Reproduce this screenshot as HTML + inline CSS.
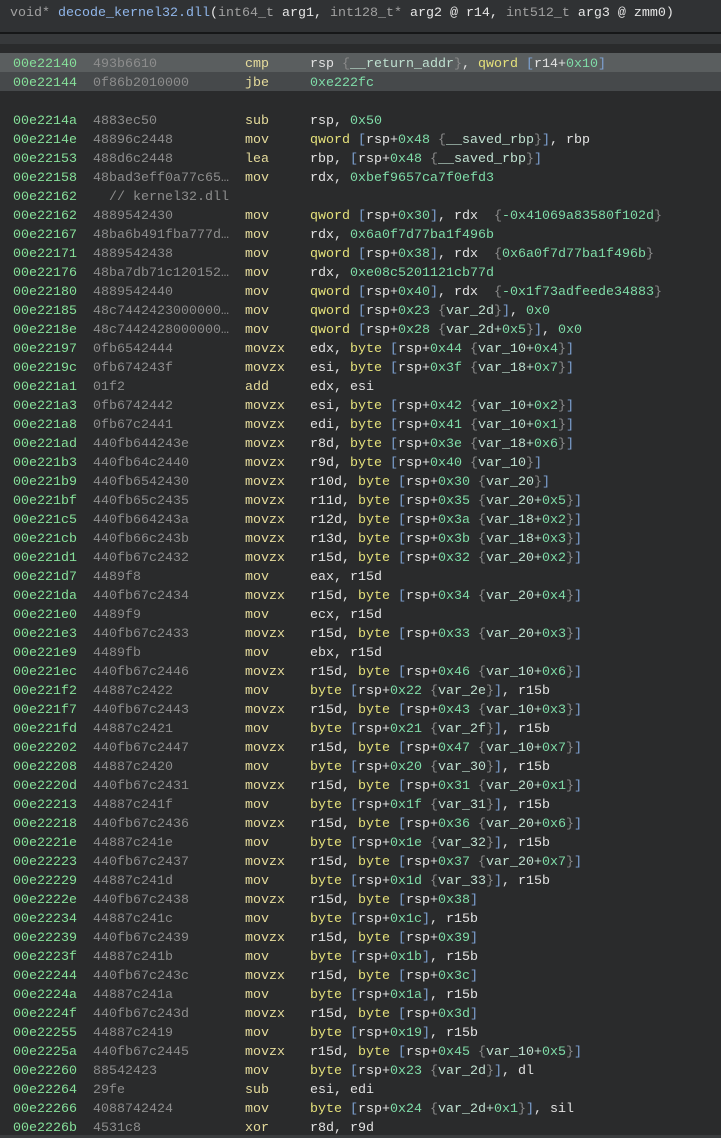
<!DOCTYPE html><html><head><meta charset="utf-8"><style>
html,body{margin:0;padding:0;background:#2a2b2c;width:721px;height:1138px;overflow:hidden}
body{font-family:"Liberation Mono","DejaVu Sans Mono",monospace;font-size:13.33px;color:#e2e2e2;position:relative}
.hd{position:absolute;left:0;top:0;width:721px;height:32px;background:#303234;border-bottom:2px solid #161718}
.hd div{position:absolute;left:10px;top:6px;white-space:pre;color:#e6e6e6}
.band{position:absolute;left:0;top:34px;width:721px;height:10px;background:#37393b}
.r{position:absolute;left:0;width:721px;height:19px;line-height:19px;white-space:pre}
.r span{position:absolute;top:2px}
.a{left:13px;color:#86e09a}.b{left:93px;color:#8d8d8d}.m{left:245px;color:#e6dc9c}.o{left:310px}
.c{left:109px;color:#8d8d8d}
i{font-style:normal}
.k{color:#e4e07a}.p{color:#7ea2d2}.n{color:#7fdca8}.v{color:#bfe0d0}.g{color:#8a8a8a}
.t{color:#a0a0a0}.f{color:#90b6ea}
.foot{position:absolute;left:0;top:1135px;width:721px;height:3px;background:#3a3c3e}
</style></head><body>
<div class="hd"><div><span class="t">void*</span> <span class="f">decode_kernel32.dll</span>(<span class="t">int64_t</span> arg1, <span class="t">int128_t*</span> arg2 @ r14, <span class="t">int512_t</span> arg3 @ zmm0)</div></div>
<div class="band"></div>
<div class="r" style="top:53px;background:#5a5e5f"><span class="a">00e22140</span><span class="b">493b6610</span><span class="m">cmp</span><span class="o">rsp <i class=g>{</i><i class=v>__return_addr</i><i class=g>}</i>, <i class=k>qword</i> <i class=p>[</i>r14+<i class=n>0x10</i><i class=p>]</i></span></div>
<div class="r" style="top:72px;background:#46494b"><span class="a">00e22144</span><span class="b">0f86b2010000</span><span class="m">jbe</span><span class="o"><i class=n>0xe222fc</i></span></div>
<div id="L" style="position:absolute;left:0;top:110px;width:721px">
<div class="r" style="top:0px"><span class="a">00e2214a</span><span class="b">4883ec50</span><span class="m">sub</span><span class="o">rsp, <i class=n>0x50</i></span></div>
<div class="r" style="top:19px"><span class="a">00e2214e</span><span class="b">48896c2448</span><span class="m">mov</span><span class="o"><i class=k>qword</i> <i class=p>[</i>rsp+<i class=n>0x48</i> <i class=g>{</i><i class=v>__saved_rbp</i><i class=g>}</i><i class=p>]</i>, rbp</span></div>
<div class="r" style="top:38px"><span class="a">00e22153</span><span class="b">488d6c2448</span><span class="m">lea</span><span class="o">rbp, <i class=p>[</i>rsp+<i class=n>0x48</i> <i class=g>{</i><i class=v>__saved_rbp</i><i class=g>}</i><i class=p>]</i></span></div>
<div class="r" style="top:57px"><span class="a">00e22158</span><span class="b">48bad3eff0a77c65…</span><span class="m">mov</span><span class="o">rdx, <i class=n>0xbef9657ca7f0efd3</i></span></div>
<div class="r" style="top:76px"><span class="a">00e22162</span><span class="c">// kernel32.dll</span></div>
<div class="r" style="top:95px"><span class="a">00e22162</span><span class="b">4889542430</span><span class="m">mov</span><span class="o"><i class=k>qword</i> <i class=p>[</i>rsp+<i class=n>0x30</i><i class=p>]</i>, rdx  <i class=g>{</i><i class=n>-0x41069a83580f102d</i><i class=g>}</i></span></div>
<div class="r" style="top:114px"><span class="a">00e22167</span><span class="b">48ba6b491fba777d…</span><span class="m">mov</span><span class="o">rdx, <i class=n>0x6a0f7d77ba1f496b</i></span></div>
<div class="r" style="top:133px"><span class="a">00e22171</span><span class="b">4889542438</span><span class="m">mov</span><span class="o"><i class=k>qword</i> <i class=p>[</i>rsp+<i class=n>0x38</i><i class=p>]</i>, rdx  <i class=g>{</i><i class=n>0x6a0f7d77ba1f496b</i><i class=g>}</i></span></div>
<div class="r" style="top:152px"><span class="a">00e22176</span><span class="b">48ba7db71c120152…</span><span class="m">mov</span><span class="o">rdx, <i class=n>0xe08c5201121cb77d</i></span></div>
<div class="r" style="top:171px"><span class="a">00e22180</span><span class="b">4889542440</span><span class="m">mov</span><span class="o"><i class=k>qword</i> <i class=p>[</i>rsp+<i class=n>0x40</i><i class=p>]</i>, rdx  <i class=g>{</i><i class=n>-0x1f73adfeede34883</i><i class=g>}</i></span></div>
<div class="r" style="top:190px"><span class="a">00e22185</span><span class="b">48c7442423000000…</span><span class="m">mov</span><span class="o"><i class=k>qword</i> <i class=p>[</i>rsp+<i class=n>0x23</i> <i class=g>{</i><i class=v>var_2d</i><i class=g>}</i><i class=p>]</i>, <i class=n>0x0</i></span></div>
<div class="r" style="top:209px"><span class="a">00e2218e</span><span class="b">48c7442428000000…</span><span class="m">mov</span><span class="o"><i class=k>qword</i> <i class=p>[</i>rsp+<i class=n>0x28</i> <i class=g>{</i><i class=v>var_2d+</i><i class=n>0x5</i><i class=g>}</i><i class=p>]</i>, <i class=n>0x0</i></span></div>
<div class="r" style="top:228px"><span class="a">00e22197</span><span class="b">0fb6542444</span><span class="m">movzx</span><span class="o">edx, <i class=k>byte</i> <i class=p>[</i>rsp+<i class=n>0x44</i> <i class=g>{</i><i class=v>var_10+</i><i class=n>0x4</i><i class=g>}</i><i class=p>]</i></span></div>
<div class="r" style="top:247px"><span class="a">00e2219c</span><span class="b">0fb674243f</span><span class="m">movzx</span><span class="o">esi, <i class=k>byte</i> <i class=p>[</i>rsp+<i class=n>0x3f</i> <i class=g>{</i><i class=v>var_18+</i><i class=n>0x7</i><i class=g>}</i><i class=p>]</i></span></div>
<div class="r" style="top:266px"><span class="a">00e221a1</span><span class="b">01f2</span><span class="m">add</span><span class="o">edx, esi</span></div>
<div class="r" style="top:285px"><span class="a">00e221a3</span><span class="b">0fb6742442</span><span class="m">movzx</span><span class="o">esi, <i class=k>byte</i> <i class=p>[</i>rsp+<i class=n>0x42</i> <i class=g>{</i><i class=v>var_10+</i><i class=n>0x2</i><i class=g>}</i><i class=p>]</i></span></div>
<div class="r" style="top:304px"><span class="a">00e221a8</span><span class="b">0fb67c2441</span><span class="m">movzx</span><span class="o">edi, <i class=k>byte</i> <i class=p>[</i>rsp+<i class=n>0x41</i> <i class=g>{</i><i class=v>var_10+</i><i class=n>0x1</i><i class=g>}</i><i class=p>]</i></span></div>
<div class="r" style="top:323px"><span class="a">00e221ad</span><span class="b">440fb644243e</span><span class="m">movzx</span><span class="o">r8d, <i class=k>byte</i> <i class=p>[</i>rsp+<i class=n>0x3e</i> <i class=g>{</i><i class=v>var_18+</i><i class=n>0x6</i><i class=g>}</i><i class=p>]</i></span></div>
<div class="r" style="top:342px"><span class="a">00e221b3</span><span class="b">440fb64c2440</span><span class="m">movzx</span><span class="o">r9d, <i class=k>byte</i> <i class=p>[</i>rsp+<i class=n>0x40</i> <i class=g>{</i><i class=v>var_10</i><i class=g>}</i><i class=p>]</i></span></div>
<div class="r" style="top:361px"><span class="a">00e221b9</span><span class="b">440fb6542430</span><span class="m">movzx</span><span class="o">r10d, <i class=k>byte</i> <i class=p>[</i>rsp+<i class=n>0x30</i> <i class=g>{</i><i class=v>var_20</i><i class=g>}</i><i class=p>]</i></span></div>
<div class="r" style="top:380px"><span class="a">00e221bf</span><span class="b">440fb65c2435</span><span class="m">movzx</span><span class="o">r11d, <i class=k>byte</i> <i class=p>[</i>rsp+<i class=n>0x35</i> <i class=g>{</i><i class=v>var_20+</i><i class=n>0x5</i><i class=g>}</i><i class=p>]</i></span></div>
<div class="r" style="top:399px"><span class="a">00e221c5</span><span class="b">440fb664243a</span><span class="m">movzx</span><span class="o">r12d, <i class=k>byte</i> <i class=p>[</i>rsp+<i class=n>0x3a</i> <i class=g>{</i><i class=v>var_18+</i><i class=n>0x2</i><i class=g>}</i><i class=p>]</i></span></div>
<div class="r" style="top:418px"><span class="a">00e221cb</span><span class="b">440fb66c243b</span><span class="m">movzx</span><span class="o">r13d, <i class=k>byte</i> <i class=p>[</i>rsp+<i class=n>0x3b</i> <i class=g>{</i><i class=v>var_18+</i><i class=n>0x3</i><i class=g>}</i><i class=p>]</i></span></div>
<div class="r" style="top:437px"><span class="a">00e221d1</span><span class="b">440fb67c2432</span><span class="m">movzx</span><span class="o">r15d, <i class=k>byte</i> <i class=p>[</i>rsp+<i class=n>0x32</i> <i class=g>{</i><i class=v>var_20+</i><i class=n>0x2</i><i class=g>}</i><i class=p>]</i></span></div>
<div class="r" style="top:456px"><span class="a">00e221d7</span><span class="b">4489f8</span><span class="m">mov</span><span class="o">eax, r15d</span></div>
<div class="r" style="top:475px"><span class="a">00e221da</span><span class="b">440fb67c2434</span><span class="m">movzx</span><span class="o">r15d, <i class=k>byte</i> <i class=p>[</i>rsp+<i class=n>0x34</i> <i class=g>{</i><i class=v>var_20+</i><i class=n>0x4</i><i class=g>}</i><i class=p>]</i></span></div>
<div class="r" style="top:494px"><span class="a">00e221e0</span><span class="b">4489f9</span><span class="m">mov</span><span class="o">ecx, r15d</span></div>
<div class="r" style="top:513px"><span class="a">00e221e3</span><span class="b">440fb67c2433</span><span class="m">movzx</span><span class="o">r15d, <i class=k>byte</i> <i class=p>[</i>rsp+<i class=n>0x33</i> <i class=g>{</i><i class=v>var_20+</i><i class=n>0x3</i><i class=g>}</i><i class=p>]</i></span></div>
<div class="r" style="top:532px"><span class="a">00e221e9</span><span class="b">4489fb</span><span class="m">mov</span><span class="o">ebx, r15d</span></div>
<div class="r" style="top:551px"><span class="a">00e221ec</span><span class="b">440fb67c2446</span><span class="m">movzx</span><span class="o">r15d, <i class=k>byte</i> <i class=p>[</i>rsp+<i class=n>0x46</i> <i class=g>{</i><i class=v>var_10+</i><i class=n>0x6</i><i class=g>}</i><i class=p>]</i></span></div>
<div class="r" style="top:570px"><span class="a">00e221f2</span><span class="b">44887c2422</span><span class="m">mov</span><span class="o"><i class=k>byte</i> <i class=p>[</i>rsp+<i class=n>0x22</i> <i class=g>{</i><i class=v>var_2e</i><i class=g>}</i><i class=p>]</i>, r15b</span></div>
<div class="r" style="top:589px"><span class="a">00e221f7</span><span class="b">440fb67c2443</span><span class="m">movzx</span><span class="o">r15d, <i class=k>byte</i> <i class=p>[</i>rsp+<i class=n>0x43</i> <i class=g>{</i><i class=v>var_10+</i><i class=n>0x3</i><i class=g>}</i><i class=p>]</i></span></div>
<div class="r" style="top:608px"><span class="a">00e221fd</span><span class="b">44887c2421</span><span class="m">mov</span><span class="o"><i class=k>byte</i> <i class=p>[</i>rsp+<i class=n>0x21</i> <i class=g>{</i><i class=v>var_2f</i><i class=g>}</i><i class=p>]</i>, r15b</span></div>
<div class="r" style="top:627px"><span class="a">00e22202</span><span class="b">440fb67c2447</span><span class="m">movzx</span><span class="o">r15d, <i class=k>byte</i> <i class=p>[</i>rsp+<i class=n>0x47</i> <i class=g>{</i><i class=v>var_10+</i><i class=n>0x7</i><i class=g>}</i><i class=p>]</i></span></div>
<div class="r" style="top:646px"><span class="a">00e22208</span><span class="b">44887c2420</span><span class="m">mov</span><span class="o"><i class=k>byte</i> <i class=p>[</i>rsp+<i class=n>0x20</i> <i class=g>{</i><i class=v>var_30</i><i class=g>}</i><i class=p>]</i>, r15b</span></div>
<div class="r" style="top:665px"><span class="a">00e2220d</span><span class="b">440fb67c2431</span><span class="m">movzx</span><span class="o">r15d, <i class=k>byte</i> <i class=p>[</i>rsp+<i class=n>0x31</i> <i class=g>{</i><i class=v>var_20+</i><i class=n>0x1</i><i class=g>}</i><i class=p>]</i></span></div>
<div class="r" style="top:684px"><span class="a">00e22213</span><span class="b">44887c241f</span><span class="m">mov</span><span class="o"><i class=k>byte</i> <i class=p>[</i>rsp+<i class=n>0x1f</i> <i class=g>{</i><i class=v>var_31</i><i class=g>}</i><i class=p>]</i>, r15b</span></div>
<div class="r" style="top:703px"><span class="a">00e22218</span><span class="b">440fb67c2436</span><span class="m">movzx</span><span class="o">r15d, <i class=k>byte</i> <i class=p>[</i>rsp+<i class=n>0x36</i> <i class=g>{</i><i class=v>var_20+</i><i class=n>0x6</i><i class=g>}</i><i class=p>]</i></span></div>
<div class="r" style="top:722px"><span class="a">00e2221e</span><span class="b">44887c241e</span><span class="m">mov</span><span class="o"><i class=k>byte</i> <i class=p>[</i>rsp+<i class=n>0x1e</i> <i class=g>{</i><i class=v>var_32</i><i class=g>}</i><i class=p>]</i>, r15b</span></div>
<div class="r" style="top:741px"><span class="a">00e22223</span><span class="b">440fb67c2437</span><span class="m">movzx</span><span class="o">r15d, <i class=k>byte</i> <i class=p>[</i>rsp+<i class=n>0x37</i> <i class=g>{</i><i class=v>var_20+</i><i class=n>0x7</i><i class=g>}</i><i class=p>]</i></span></div>
<div class="r" style="top:760px"><span class="a">00e22229</span><span class="b">44887c241d</span><span class="m">mov</span><span class="o"><i class=k>byte</i> <i class=p>[</i>rsp+<i class=n>0x1d</i> <i class=g>{</i><i class=v>var_33</i><i class=g>}</i><i class=p>]</i>, r15b</span></div>
<div class="r" style="top:779px"><span class="a">00e2222e</span><span class="b">440fb67c2438</span><span class="m">movzx</span><span class="o">r15d, <i class=k>byte</i> <i class=p>[</i>rsp+<i class=n>0x38</i><i class=p>]</i></span></div>
<div class="r" style="top:798px"><span class="a">00e22234</span><span class="b">44887c241c</span><span class="m">mov</span><span class="o"><i class=k>byte</i> <i class=p>[</i>rsp+<i class=n>0x1c</i><i class=p>]</i>, r15b</span></div>
<div class="r" style="top:817px"><span class="a">00e22239</span><span class="b">440fb67c2439</span><span class="m">movzx</span><span class="o">r15d, <i class=k>byte</i> <i class=p>[</i>rsp+<i class=n>0x39</i><i class=p>]</i></span></div>
<div class="r" style="top:836px"><span class="a">00e2223f</span><span class="b">44887c241b</span><span class="m">mov</span><span class="o"><i class=k>byte</i> <i class=p>[</i>rsp+<i class=n>0x1b</i><i class=p>]</i>, r15b</span></div>
<div class="r" style="top:855px"><span class="a">00e22244</span><span class="b">440fb67c243c</span><span class="m">movzx</span><span class="o">r15d, <i class=k>byte</i> <i class=p>[</i>rsp+<i class=n>0x3c</i><i class=p>]</i></span></div>
<div class="r" style="top:874px"><span class="a">00e2224a</span><span class="b">44887c241a</span><span class="m">mov</span><span class="o"><i class=k>byte</i> <i class=p>[</i>rsp+<i class=n>0x1a</i><i class=p>]</i>, r15b</span></div>
<div class="r" style="top:893px"><span class="a">00e2224f</span><span class="b">440fb67c243d</span><span class="m">movzx</span><span class="o">r15d, <i class=k>byte</i> <i class=p>[</i>rsp+<i class=n>0x3d</i><i class=p>]</i></span></div>
<div class="r" style="top:912px"><span class="a">00e22255</span><span class="b">44887c2419</span><span class="m">mov</span><span class="o"><i class=k>byte</i> <i class=p>[</i>rsp+<i class=n>0x19</i><i class=p>]</i>, r15b</span></div>
<div class="r" style="top:931px"><span class="a">00e2225a</span><span class="b">440fb67c2445</span><span class="m">movzx</span><span class="o">r15d, <i class=k>byte</i> <i class=p>[</i>rsp+<i class=n>0x45</i> <i class=g>{</i><i class=v>var_10+</i><i class=n>0x5</i><i class=g>}</i><i class=p>]</i></span></div>
<div class="r" style="top:950px"><span class="a">00e22260</span><span class="b">88542423</span><span class="m">mov</span><span class="o"><i class=k>byte</i> <i class=p>[</i>rsp+<i class=n>0x23</i> <i class=g>{</i><i class=v>var_2d</i><i class=g>}</i><i class=p>]</i>, dl</span></div>
<div class="r" style="top:969px"><span class="a">00e22264</span><span class="b">29fe</span><span class="m">sub</span><span class="o">esi, edi</span></div>
<div class="r" style="top:988px"><span class="a">00e22266</span><span class="b">4088742424</span><span class="m">mov</span><span class="o"><i class=k>byte</i> <i class=p>[</i>rsp+<i class=n>0x24</i> <i class=g>{</i><i class=v>var_2d+</i><i class=n>0x1</i><i class=g>}</i><i class=p>]</i>, sil</span></div>
<div class="r" style="top:1007px"><span class="a">00e2226b</span><span class="b">4531c8</span><span class="m">xor</span><span class="o">r8d, r9d</span></div>
</div>
<div class="foot"></div>
</body></html>
